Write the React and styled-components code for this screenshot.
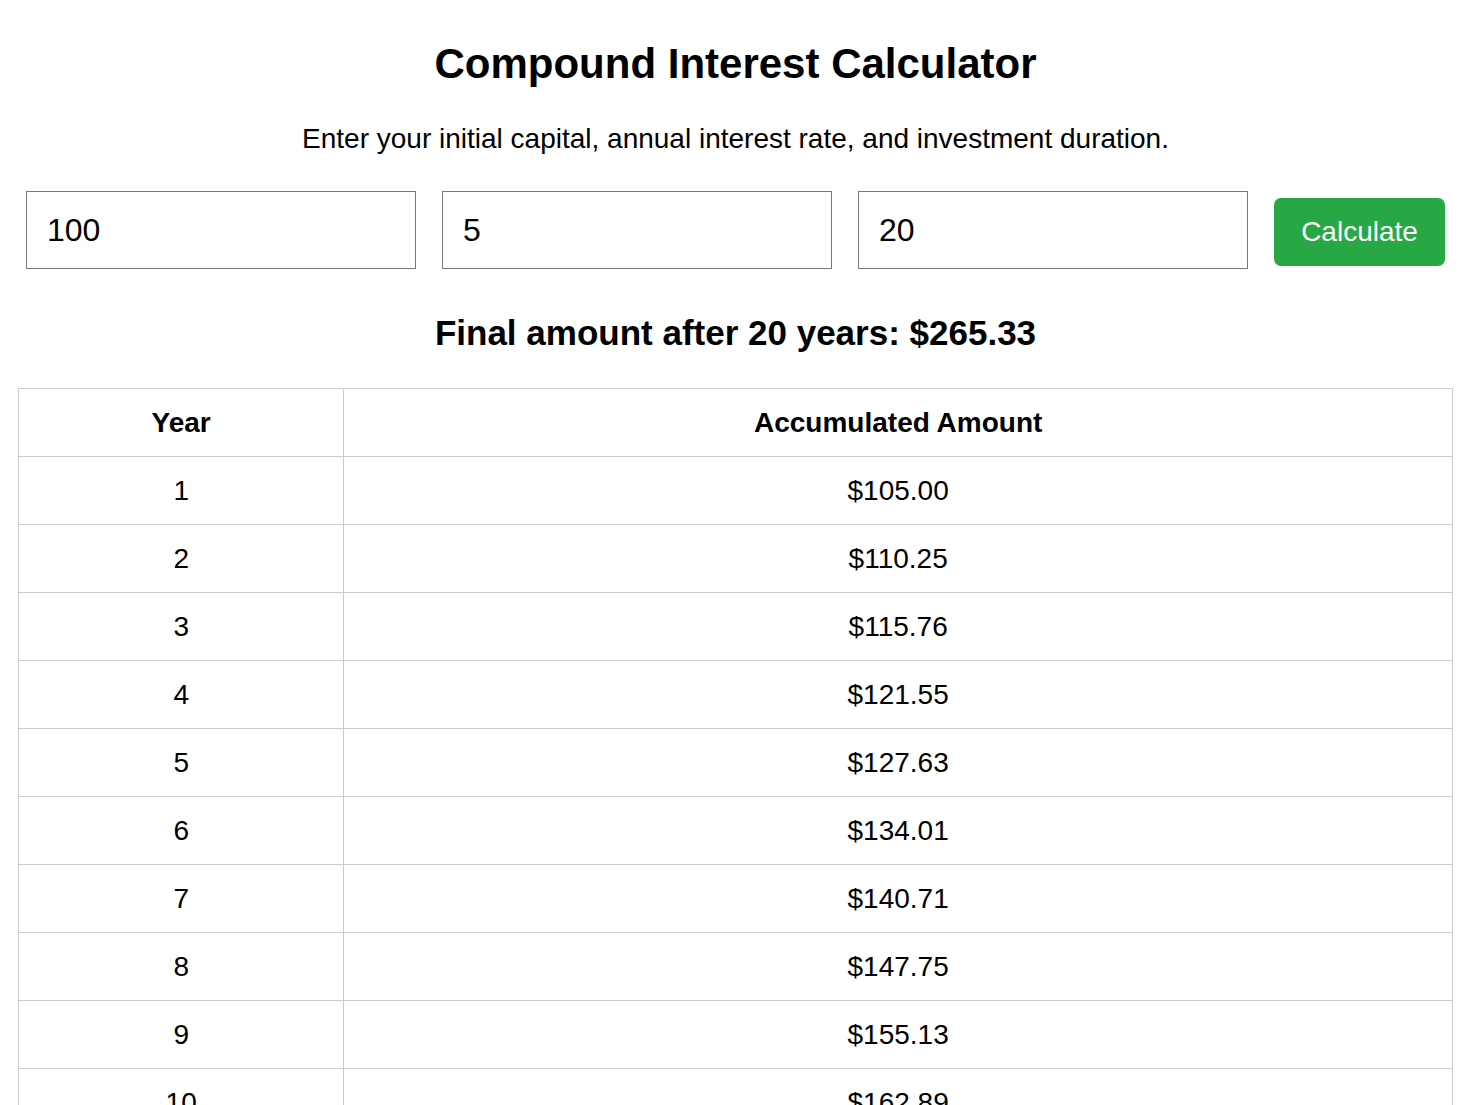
import React, { useState } from "react";
import styled, { createGlobalStyle } from "styled-components";

const GlobalStyle = createGlobalStyle`
  body {
    margin: 8px;
    background: #fff;
    color: #000;
    font-family: "Liberation Sans", Arial, sans-serif;
  }
`;

const Page = styled.div`
  padding: 0 21px 0 10px;
  text-align: center;
`;

const Title = styled.h1`
  font-size: 42px;
  font-weight: bold;
  margin: 32px 0 35px;
`;

const Intro = styled.p`
  font-size: 28px;
  margin: 0 0 28px;
`;

const Form = styled.div`
  display: flex;
  align-items: center;
  gap: 10px;
`;

const Field = styled.input`
  flex: 1;
  min-width: 0;
  margin: 8px;
  padding: 19.5px 20px;
  font-size: 32px;
  font-family: inherit;
  border: 1px solid #767676;
  border-radius: 0;
  outline: none;
  color: #000;
`;

const Button = styled.button`
  margin: 10px 8px 6px;
  width: 171px;
  height: 68px;
  padding: 0;
  font-size: 28px;
  font-family: inherit;
  color: #fff;
  background: #28a745;
  border: none;
  border-radius: 7px;
  cursor: pointer;
`;

const Result = styled.h2`
  font-size: 35px;
  font-weight: bold;
  margin: 36px 0 35px;
`;

const Table = styled.table`
  width: 100%;
  border-collapse: collapse;
  font-size: 28px;
`;

const Th = styled.th`
  border: 1px solid #ccc;
  padding: 17.5px;
  font-weight: bold;
`;

const Td = styled.td`
  border: 1px solid #ccc;
  padding: 17.5px;
`;

const money = (v) => "$" + v.toFixed(2);

function build(p, r, n) {
  const out = [];
  for (let y = 1; y <= n; y++) {
    out.push({ year: y, amount: p * Math.pow(1 + r / 100, y) });
  }
  return out;
}

export default function App() {
  const [principal, setPrincipal] = useState("100");
  const [rate, setRate] = useState("5");
  const [years, setYears] = useState("20");
  const [rows, setRows] = useState(() => build(100, 5, 20));

  const calculate = () => {
    setRows(build(parseFloat(principal) || 0, parseFloat(rate) || 0, parseInt(years) || 0));
  };

  const last = rows[rows.length - 1];

  return (
    <Page>
      <GlobalStyle />
      <Title>Compound Interest Calculator</Title>
      <Intro>Enter your initial capital, annual interest rate, and investment duration.</Intro>
      <Form>
        <Field type="number" value={principal} onChange={(e) => setPrincipal(e.target.value)} />
        <Field type="number" value={rate} onChange={(e) => setRate(e.target.value)} />
        <Field type="number" value={years} onChange={(e) => setYears(e.target.value)} />
        <Button onClick={calculate}>Calculate</Button>
      </Form>
      {last && (
        <Result>
          Final amount after {rows.length} years: {money(last.amount)}
        </Result>
      )}
      <Table>
        <thead>
          <tr>
            <Th>Year</Th>
            <Th>Accumulated Amount</Th>
          </tr>
        </thead>
        <tbody>
          {rows.map((r) => (
            <tr key={r.year}>
              <Td>{r.year}</Td>
              <Td>{money(r.amount)}</Td>
            </tr>
          ))}
        </tbody>
      </Table>
    </Page>
  );
}
